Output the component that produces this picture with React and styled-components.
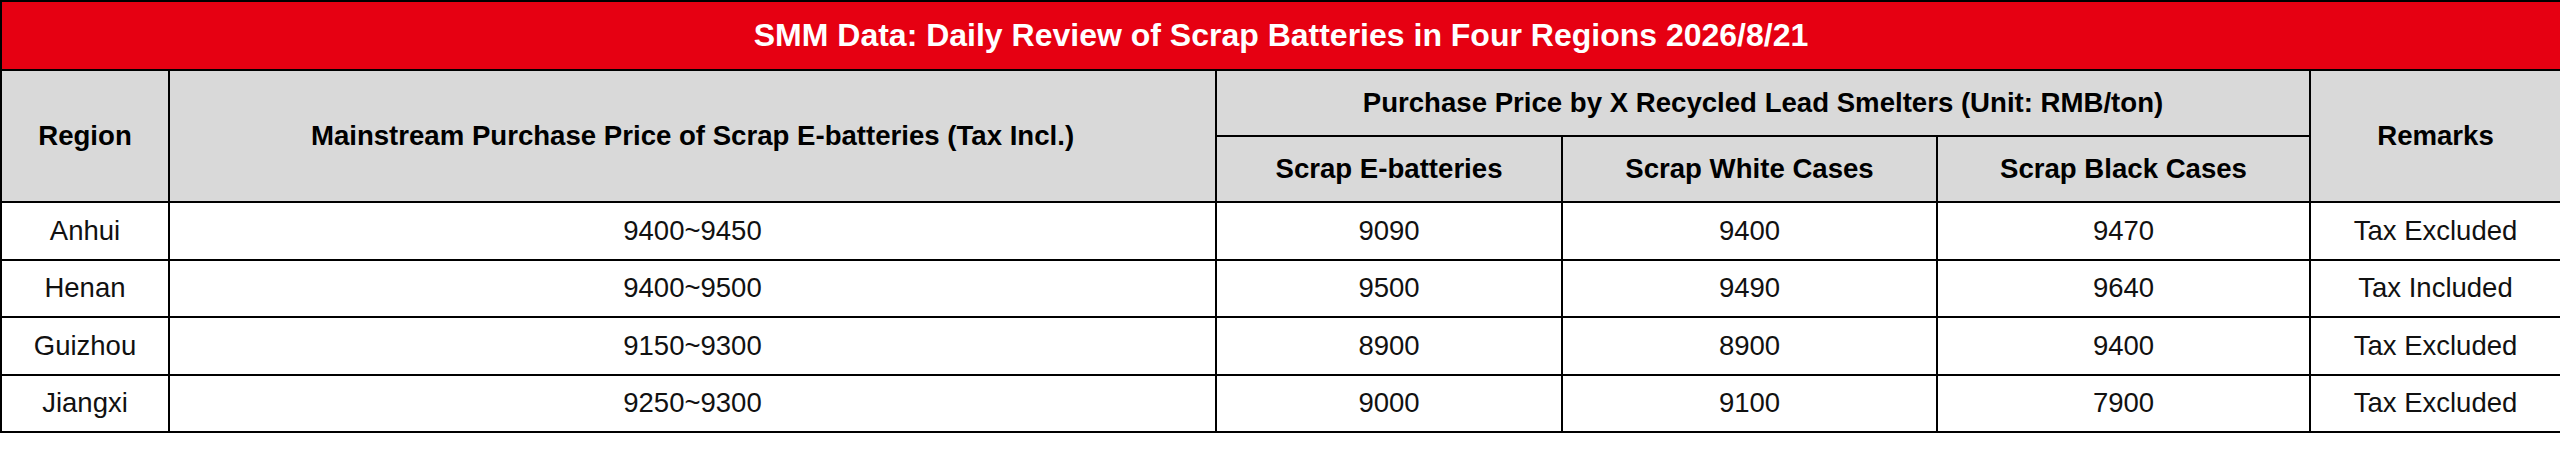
import React from 'react';
import styled, { createGlobalStyle } from 'styled-components';

const GlobalStyle = createGlobalStyle`
  html, body {
    margin: 0;
    padding: 0;
    background: #ffffff;
  }
  body {
    font-family: 'Liberation Sans', Arial, sans-serif;
  }
`;

const Table = styled.table`
  width: 2560px;
  border-collapse: collapse;
  table-layout: fixed;
  font-family: 'Liberation Sans', Arial, sans-serif;
  color: #000;
`;

const TitleCell = styled.th`
  height: 67px;
  padding: 0;
  background: #e60012;
  color: #ffffff;
  font-size: 32px;
  font-weight: bold;
  text-align: center;
  border: 2px solid #000;
`;

const HeadCell = styled.th`
  height: ${(p) => p.h}px;
  padding: 0;
  background: #d9d9d9;
  color: #000;
  font-size: 27.6px;
  font-weight: bold;
  text-align: center;
  vertical-align: middle;
  border: 2px solid #000;
`;

const BodyRow = styled.tr`
  height: 57.5px;
`;

const Cell = styled.td`
  padding: 0;
  font-size: 27.5px;
  text-align: center;
  vertical-align: middle;
  border: 2px solid #000;
  color: #111;
`;

const widths = [168, 1047, 346, 375, 373, 251];

const rows = [
  ['Anhui', '9400~9450', '9090', '9400', '9470', 'Tax Excluded'],
  ['Henan', '9400~9500', '9500', '9490', '9640', 'Tax Included'],
  ['Guizhou', '9150~9300', '8900', '8900', '9400', 'Tax Excluded'],
  ['Jiangxi', '9250~9300', '9000', '9100', '7900', 'Tax Excluded'],
];

export default function App() {
  return (
    <>
      <GlobalStyle />
      <Table>
        <colgroup>
          {widths.map((w, i) => (
            <col key={i} style={{ width: w }} />
          ))}
        </colgroup>
        <thead>
          <tr>
            <TitleCell colSpan={6}>
              SMM Data: Daily Review of Scrap Batteries in Four Regions 2026/8/21
            </TitleCell>
          </tr>
          <tr>
            <HeadCell rowSpan={2} h={64}>Region</HeadCell>
            <HeadCell rowSpan={2} h={64}>
              Mainstream Purchase Price of Scrap E-batteries (Tax Incl.)
            </HeadCell>
            <HeadCell colSpan={3} h={64}>
              Purchase Price by X Recycled Lead Smelters (Unit: RMB/ton)
            </HeadCell>
            <HeadCell rowSpan={2} h={64}>Remarks</HeadCell>
          </tr>
          <tr>
            <HeadCell h={64}>Scrap E-batteries</HeadCell>
            <HeadCell h={64}>Scrap White Cases</HeadCell>
            <HeadCell h={64}>Scrap Black Cases</HeadCell>
          </tr>
        </thead>
        <tbody>
          {rows.map((r) => (
            <BodyRow key={r[0]}>
              {r.map((v, i) => (
                <Cell key={i}>{v}</Cell>
              ))}
            </BodyRow>
          ))}
        </tbody>
      </Table>
    </>
  );
}
